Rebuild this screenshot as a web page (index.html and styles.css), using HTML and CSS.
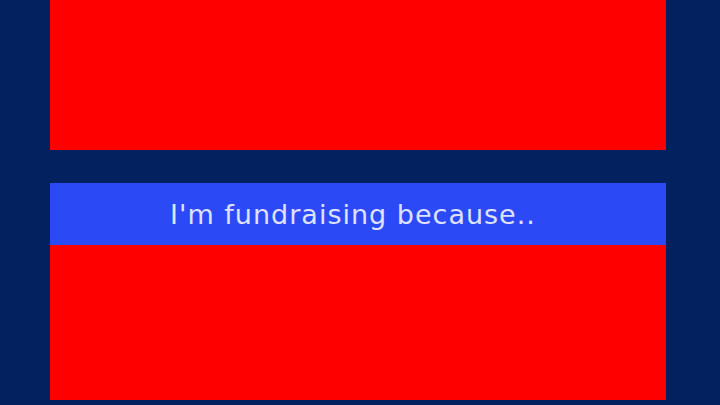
FILE: index.html
```html
<!DOCTYPE html>
<html>
<head>
<meta charset="utf-8">
<link rel="stylesheet" href="styles.css">
</head>
<body>
<div class="page">
  <div class="panel panel-top"></div>
  <div class="card">
    <div class="card-head">I'm fundraising because..</div>
    <div class="panel panel-bottom"></div>
  </div>
</div>
</body>
</html>
```
FILE: styles.css
```css
html, body {
  margin: 0;
  padding: 0;
  background: #03215f;
}
.page {
  width: 720px;
  height: 405px;
  box-sizing: border-box;
  padding: 0 54px 0 50px;
  display: flex;
  flex-direction: column;
  gap: 33px;
  overflow: hidden;
}
.panel {
  background: #ff0000;
}
.panel-top {
  height: 150px;
}
.card {
  display: flex;
  flex-direction: column;
}
.card-head {
  height: 62px;
  background: #2b4af5;
  color: #dfe2ff;
  font-family: "DejaVu Sans", sans-serif;
  font-size: 27px;
  letter-spacing: 1px;
  display: flex;
  align-items: center;
  justify-content: center;
  padding-right: 10px;
}
.panel-bottom {
  height: 155px;
}
```
